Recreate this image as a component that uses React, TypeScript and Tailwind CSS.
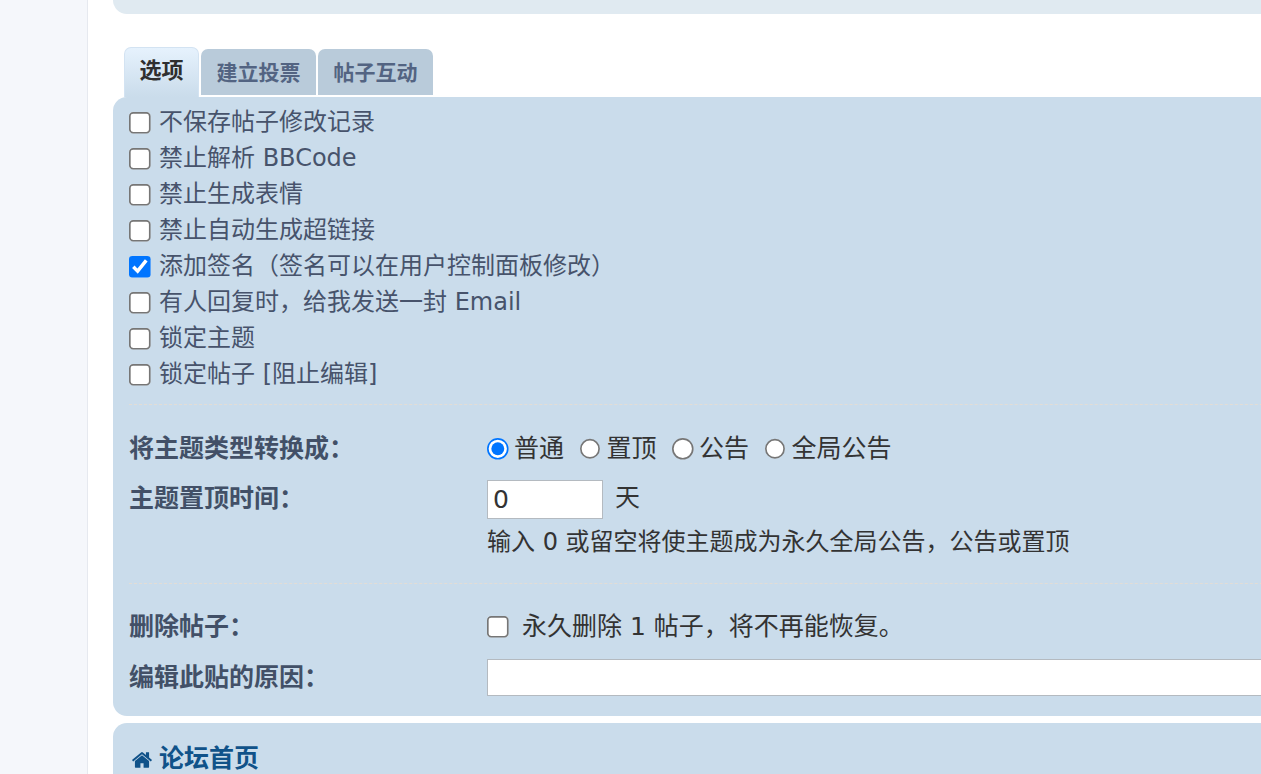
const options = [
  { label: "不保存帖子修改记录" },
  { label: "禁止解析 BBCode" },
  { label: "禁止生成表情" },
  { label: "禁止自动生成超链接" },
  { label: "添加签名（签名可以在用户控制面板修改）", checked: true },
  { label: "有人回复时，给我发送一封 Email" },
  { label: "锁定主题" },
  { label: "锁定帖子 [阻止编辑]" },
];

const radios = ["普通", "置顶", "公告", "全局公告"];

function Label({ children }: { children: string }) {
  return <div className="w-[358px] shrink-0 text-[25px] font-bold text-[#425067]">{children}</div>;
}

function HomeIcon() {
  return (
    <svg viewBox="0 0 1792 1792" fill="currentColor" className="w-[22px] h-[22px] mr-[6px] mt-[1px]">
      <path d="M1472 992v480q0 26-19 45t-45 19h-384v-384h-256v384h-384q-26 0-45-19t-19-45v-480q0-1 .5-3t.5-3l575-474 575 474q1 2 1 6zm223-69l-62 74q-8 9-21 11h-3q-13 0-21-7l-692-577-692 577q-12 8-24 7-13-2-21-11l-62-74q-8-10-7-23.5t11-21.5l719-599q32-26 76-26t76 26l244 204v-195q0-14 9-23t23-9h192q14 0 23 9t9 23v408l219 182q10 8 11 21.5t-7 23.5z" />
    </svg>
  );
}

export default function App() {
  return (
    <div className="h-[774px] w-[1261px] overflow-hidden flex bg-white text-[24px] leading-[36px] font-['DejaVu_Sans','Noto_Sans_CJK_SC',sans-serif]">
      <div className="w-[88px] shrink-0 bg-[#f5f7fb] border-r border-[#e6e9ef]" />

      <div className="w-[1400px] shrink-0 ml-[25px]">
        <div className="h-[14px] bg-[#e0eaf1] rounded-bl-[14px]" />

        {/* tabs */}
        <div className="flex items-end gap-[2px] ml-[11px] mt-[31px] h-[50px] text-[21px] font-bold">
          <div className="w-[75px] h-[50px] -mb-[2px] rounded-t-[7px] border border-b-0 border-[#d3e3f2] bg-gradient-to-b from-[#e6f2fd] to-[#cadceb] text-[22px] text-[#2f2f2f] flex justify-center pt-[5px]">
            选项
          </div>
          <div className="w-[115px] h-[46px] pt-[2px] rounded-t-[7px] bg-[#b9cbda] text-[#536482] flex justify-center items-center">
            建立投票
          </div>
          <div className="w-[115px] h-[46px] pt-[2px] rounded-t-[7px] bg-[#b9cbda] text-[#536482] flex justify-center items-center">
            帖子互动
          </div>
        </div>

        {/* options panel */}
        <div className="mt-[2px] h-[619px] bg-[#cadceb] rounded-l-[14px] pl-[16px] pt-[7px]">
          <div className="h-[301px] border-b border-dashed border-[#e2ddd6]">
            {options.map((o) => (
              <label key={o.label} className="h-[36px] flex items-center text-[#47536b]">
                <span className="flex items-center justify-center w-[20px] h-[20px] ml-[1px] mr-[9px] mt-[2px]">
                  <input type="checkbox" defaultChecked={o.checked} className="[zoom:1.66] w-[13px] h-[13px] shrink-0" />
                </span>
                <span>{o.label}</span>
              </label>
            ))}
          </div>

          <div className="h-[179px] border-b border-dashed border-[#e2ddd6] pt-[26px]">
            <div className="flex h-[36px] items-center">
              <Label>将主题类型转换成：</Label>
              <div className="flex items-center text-[25px] text-[#333333]">
                {radios.map((r, i) => (
                  <label key={r} className="flex items-center mr-[15.5px]">
                    <span className="flex items-center justify-center w-[20px] h-[20px] ml-[1px] mr-[6px]">
                      <input type="radio" name="topic" defaultChecked={i === 0} className="[zoom:1.66] w-[13px] h-[13px] shrink-0" />
                    </span>
                    {r}
                  </label>
                ))}
              </div>
            </div>
            <div className="flex mt-[13px]">
              <div className="leading-[38px]">
                <Label>主题置顶时间：</Label>
              </div>
              <div className="text-[#333333]">
                <div className="flex items-center text-[25px]">
                  <input
                    type="text"
                    defaultValue="0"
                    className="w-[116px] h-[39px] bg-white border border-[#b4bac0] px-[5px] text-[#333333]"
                  />
                  <span className="ml-[12px] -mt-[3px]">天</span>
                </div>
                <div className="mt-[5px]">输入 0 或留空将使主题成为永久全局公告，公告或置顶</div>
              </div>
            </div>
          </div>

          <div className="flex h-[36px] items-center mt-[25px]">
            <Label>删除帖子：</Label>
            <label className="flex items-center text-[25px] text-[#333333]">
              <span className="flex items-center justify-center w-[20px] h-[20px] ml-[1px] mr-[14px]">
                <input type="checkbox" className="[zoom:1.66] w-[13px] h-[13px] shrink-0" />
              </span>
              永久删除 1 帖子，将不再能恢复。
            </label>
          </div>
          <div className="flex h-[37px] items-center mt-[14px]">
            <Label>编辑此贴的原因：</Label>
            <input type="text" className="flex-1 h-[37px] bg-white border border-[#b4bac0]" />
          </div>
        </div>

        {/* footer nav */}
        <div className="mt-[7px] h-[80px] bg-[#cadceb] rounded-tl-[14px] pl-[18px] pt-[18px] flex items-start">
          <div className="flex items-center text-[25px] font-bold text-[#105289]">
            <HomeIcon />
            论坛首页
          </div>
        </div>
      </div>
    </div>
  );
}
